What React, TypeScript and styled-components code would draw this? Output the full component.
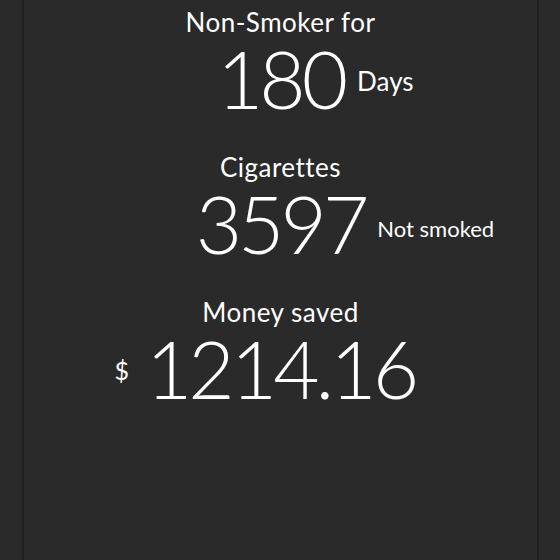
import React from "react";
import styled, { createGlobalStyle } from "styled-components";

const Global = createGlobalStyle`
  html, body {
    margin: 0;
    padding: 0;
    background: #2a2a2a;
    font-family: Lato, "Open Sans", sans-serif;
    color: #ffffff;
  }
`;

const Frame = styled.div`
  box-sizing: border-box;
  min-height: 560px;
  margin: 0 21px 0 22px;
  border-left: 2px solid #1f1f1f;
  border-right: 2px solid #1f1f1f;
  padding-top: 6px;
  display: flex;
  flex-direction: column;
  align-items: center;
  gap: 33px;
`;

const Stat = styled.section`
  display: flex;
  flex-direction: column;
  align-items: center;
`;

const Label = styled.div`
  font-size: 26px;
  line-height: 32px;
  font-weight: 400;
  letter-spacing: 0.5px;
  white-space: nowrap;
`;

const ValueRow = styled.div`
  position: relative;
`;

const Value = styled.div`
  font-size: 80px;
  line-height: 80px;
  font-weight: 300;
  letter-spacing: -4px;
  white-space: nowrap;
`;

const Unit = styled.span<{ $side: "left" | "right"; $top: number; $size: number; $gap: number }>`
  position: absolute;
  top: ${(p) => p.$top}px;
  ${(p) => (p.$side === "right" ? `left: calc(100% + ${p.$gap}px);` : `right: calc(100% + ${p.$gap}px);`)}
  font-size: ${(p) => p.$size}px;
  line-height: 30px;
  font-weight: 400;
  white-space: nowrap;
`;

type StatProps = {
  label: string;
  value: string;
  unit: string;
  side: "left" | "right";
  top: number;
  size: number;
  gap: number;
};

function StatBlock({ label, value, unit, side, top, size, gap }: StatProps) {
  return (
    <Stat>
      <Label>{label}</Label>
      <ValueRow>
        <Value>{value}</Value>
        <Unit $side={side} $top={top} $size={size} $gap={gap}>
          {unit}
        </Unit>
      </ValueRow>
    </Stat>
  );
}

export default function App() {
  return (
    <>
      <Global />
      <Frame>
        <StatBlock label="Non-Smoker for" value="180" unit="Days" side="right" top={28} size={26} gap={13} />
        <StatBlock label="Cigarettes" value="3597" unit="Not smoked" side="right" top={31} size={22} gap={12} />
        <StatBlock label="Money saved" value="1214.16" unit="$" side="left" top={27} size={25} gap={17} />
      </Frame>
    </>
  );
}
